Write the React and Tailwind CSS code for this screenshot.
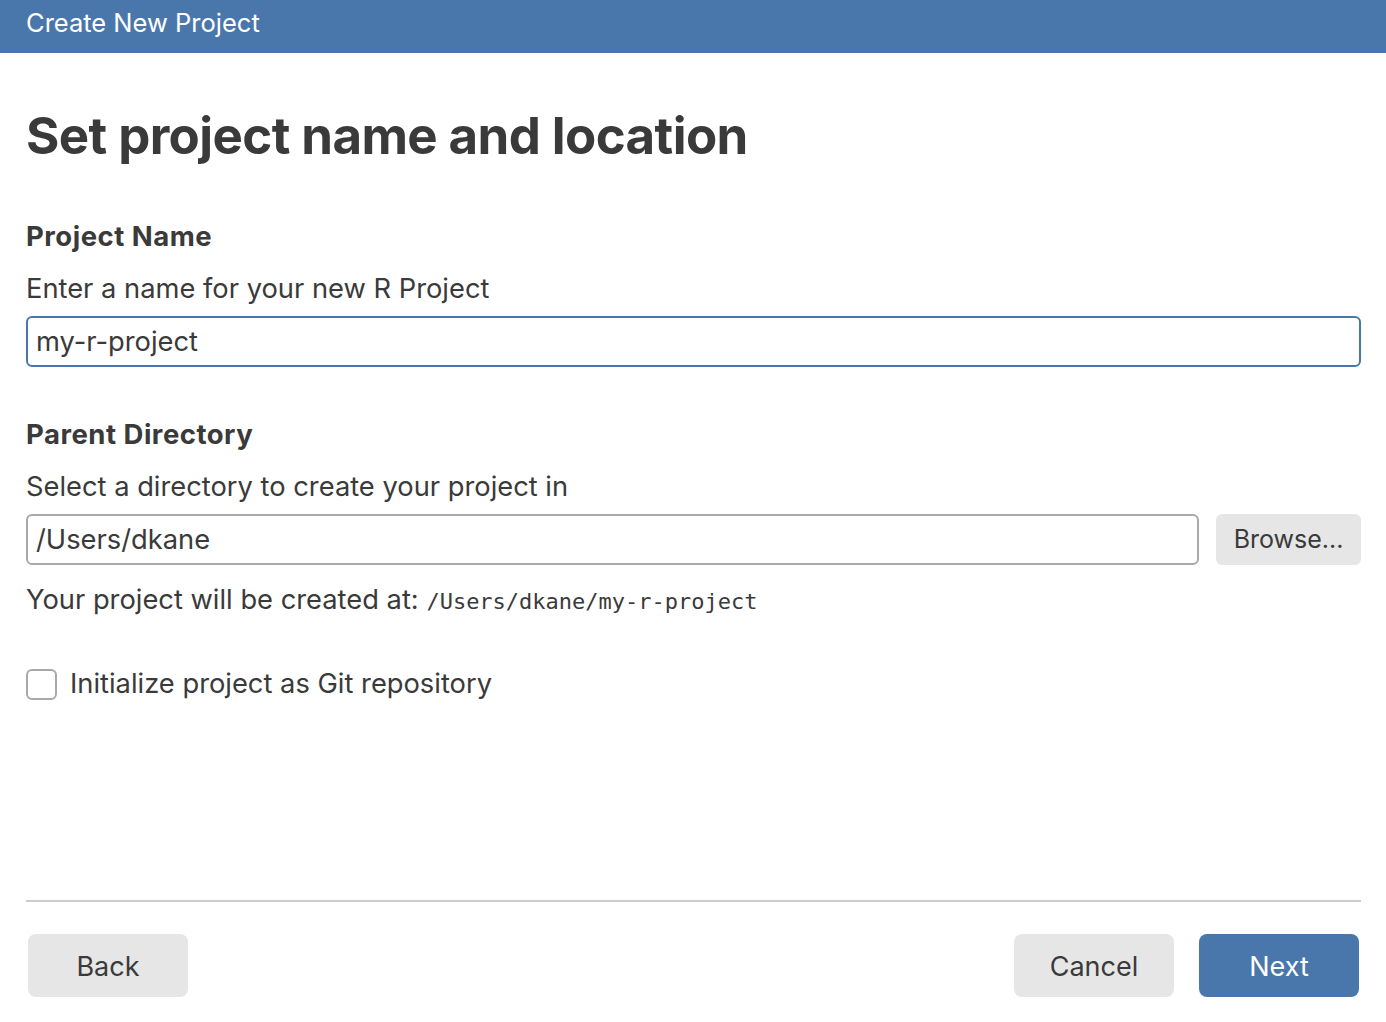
import React, { useState } from "react";

export default function App() {
  const [name, setName] = useState("my-r-project");
  const [dir, setDir] = useState("/Users/dkane");
  const [git, setGit] = useState(false);

  return (
    <div
      className="h-screen flex flex-col bg-white text-[#3a3a3a]"
      style={{ fontFamily: "Inter, 'Noto Sans', sans-serif" }}
    >
      <header className="h-[53px] shrink-0 bg-[#4a77ab] px-[26px] flex items-center">
        <h1 className="text-[25.5px] text-white leading-none -mt-[8px]">Create New Project</h1>
      </header>

      <main className="pl-[26px] pr-[25px] flex-1 flex flex-col">
        <h2 className="mt-[52px] text-[51px] font-bold leading-[62px] tracking-[-0.6px]">
          Set project name and location
        </h2>

        <h3 className="mt-[51px] text-[27.5px] font-bold leading-[36px] tracking-[0.5px]">Project Name</h3>
        <p className="mt-[17px] text-[27.3px] leading-[36px]">Enter a name for your new R Project</p>
        <input
          value={name}
          onChange={(e) => setName(e.target.value)}
          className="mt-[9px] h-[51px] w-full rounded-[6px] border-2 border-[#4a77ab] px-[8px] text-[27.3px] outline-none"
        />

        <h3 className="mt-[49px] text-[27.5px] font-bold leading-[36px] tracking-[0.5px]">Parent Directory</h3>
        <p className="mt-[17px] text-[27.3px] leading-[36px]">Select a directory to create your project in</p>
        <div className="mt-[9px] flex gap-[17px]">
          <input
            value={dir}
            onChange={(e) => setDir(e.target.value)}
            className="h-[51px] flex-1 rounded-[6px] border-2 border-[#a9a9a9] px-[8px] text-[27.3px] outline-none"
          />
          <button className="h-[51px] w-[145px] rounded-[6px] bg-[#e6e6e6] text-[25px]">Browse...</button>
        </div>
        <p className="mt-[17px] text-[27.3px] leading-[36px]">
          Your project will be created at:{" "}
          <span className="text-[22px]" style={{ fontFamily: "'DejaVu Sans Mono', monospace" }}>
            /Users/dkane/my-r-project
          </span>
        </p>

        <label className="mt-[46px] flex items-center gap-[13px] cursor-pointer">
          <span
            onClick={() => setGit(!git)}
            className="w-[31px] h-[31px] rounded-[6px] border-2 border-[#a9a9a9] flex items-center justify-center text-[20px]"
          >
            {git ? "✓" : ""}
          </span>
          <span className="text-[27.3px] leading-[36px]">Initialize project as Git repository</span>
        </label>

        <div className="mt-auto border-t-2 border-[#cccccc]" />
        <footer className="mt-[32px] mb-[25px] flex items-center">
          <button className="ml-[2px] w-[160px] h-[63px] rounded-[8px] bg-[#e6e6e6] text-[27px] pt-[3px]">Back</button>
          <div className="flex-1" />
          <button className="w-[160px] h-[63px] rounded-[8px] bg-[#e6e6e6] text-[27px] pt-[3px]">Cancel</button>
          <button className="ml-[25px] mr-[2px] w-[160px] h-[63px] rounded-[8px] bg-[#4a77ab] text-white text-[27px] pt-[3px]">
            Next
          </button>
        </footer>
      </main>
    </div>
  );
}
